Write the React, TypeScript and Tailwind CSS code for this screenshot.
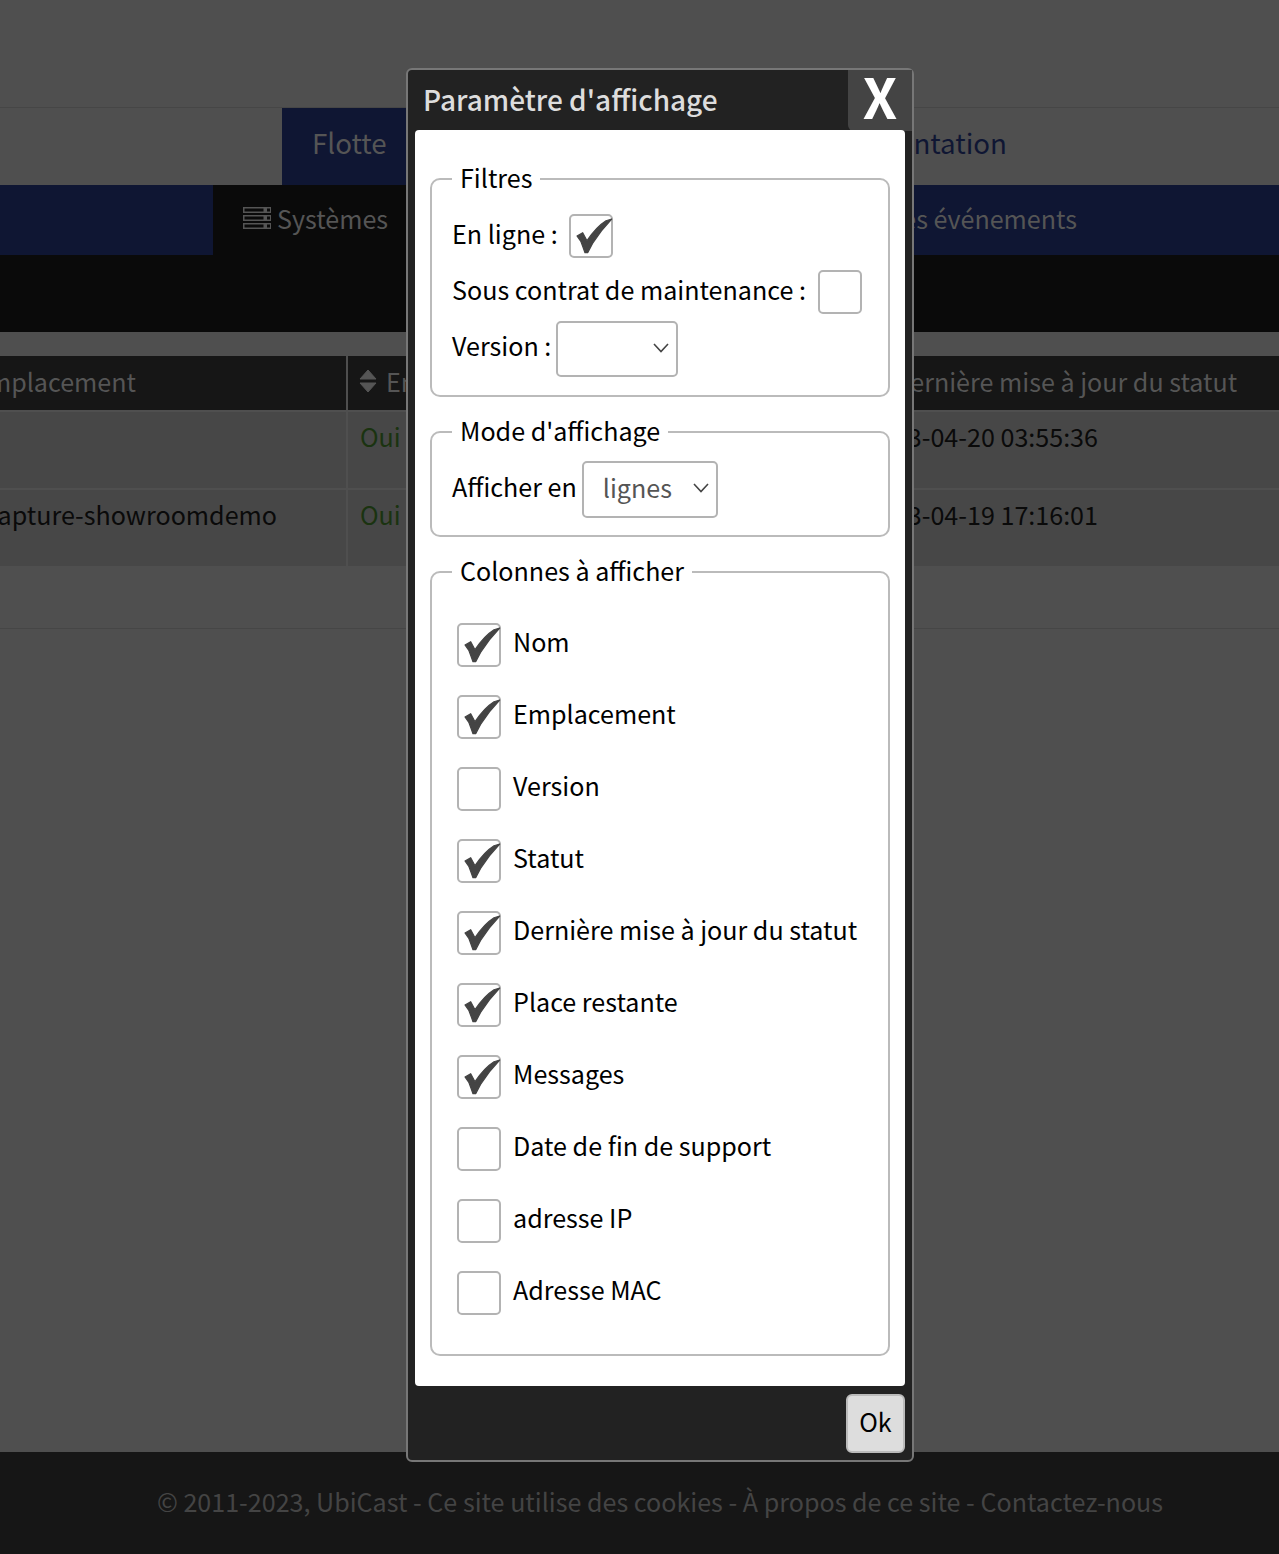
import React from "react";

const font = { fontFamily: '"Noto Sans CJK JP", "Noto Sans", sans-serif' };

function Check() {
  return (
    <svg viewBox="0 0 44 44" className="absolute left-0 top-0 h-[44px] w-[44px]">
      <path d="M8 22 L13.7 18.7 L18 26.7 Q27 13 37 6.7 L42.7 5 Q32 16 23.7 29.3 L18.7 38.7 L16 38.7 Q14 33 12 27.7 Z" fill="#444444" stroke="#444444" strokeWidth="1.2" strokeLinejoin="round" />
    </svg>
  );
}

function Box({ on, className = "" }: { on?: boolean; className?: string }) {
  return (
    <span className={`relative block h-[44px] w-[44px] shrink-0 rounded-[5px] border-2 border-[#b3b3b3] bg-white ${className}`}>
      {on && <span className="absolute -left-[2px] -top-[2px] block h-[44px] w-[44px]"><Check /></span>}
    </span>
  );
}

function Picker({ value, width, height, className = "" }: { value: string; width: string; height: string; className?: string }) {
  return (
    <span className={`relative block shrink-0 ${width} ${height} ${className}`}>
      <select
        defaultValue={value}
        className="h-full w-full appearance-none rounded-[5px] border-2 border-[#b3b3b3] bg-white pb-[6px] pl-[19px] text-[25.1px] text-[#555555] outline-none"
      >
        <option value={value}>{value}</option>
      </select>
      <svg viewBox="0 0 16 10" className="pointer-events-none absolute right-[9px] top-[22px] h-[10px] w-[16px]" fill="none" stroke="#444444" strokeWidth="1.6">
        <path d="M1 1 L8 8.5 L15 1" />
      </svg>
    </span>
  );
}

function Group({ title, children, className = "" }: { title: string; children: React.ReactNode; className?: string }) {
  return (
    <fieldset className={`rounded-[10px] border-2 border-[#bbbbbb] px-[20px] ${className}`}>
      <legend className="px-[8px] pb-[4px] text-[25.1px] leading-[36px]">{title}</legend>
      {children}
    </fieldset>
  );
}

const columns: [string, boolean][] = [
  ["Nom", true],
  ["Emplacement", true],
  ["Version", false],
  ["Statut", true],
  ["Dernière mise à jour du statut", true],
  ["Place restante", true],
  ["Messages", true],
  ["Date de fin de support", false],
  ["adresse IP", false],
  ["Adresse MAC", false],
];

function ServerIcon() {
  return (
    <svg viewBox="0 0 28 22" className="h-[22px] w-[28px]" fill="#555555">
      <path fillRule="evenodd" d="M0 0h28v6H0z M1.5 1.5v3h19v-3z M24 1.5v3h3v-3z" />
      <path fillRule="evenodd" d="M0 8h28v6H0z M1.5 9.5v3h19v-3z M24 9.5v3h3v-3z" />
      <path fillRule="evenodd" d="M0 16h28v6H0z M1.5 17.5v3h19v-3z M24 17.5v3h3v-3z" />
    </svg>
  );
}

function SortIcon() {
  return (
    <svg viewBox="0 0 18 24" className="h-[24px] w-[18px]" fill="#555555" stroke="#555555" strokeLinejoin="round">
      <path d="M9 1 L17 10 H1 Z" />
      <path d="M1 14 H17 L9 23 Z" />
    </svg>
  );
}

export default function App() {
  return (
    <div className="relative h-[1554px] w-[1279px] overflow-hidden bg-[#4f4f4f] text-[25.1px] leading-[40px]" style={font}>
      <div className="h-[107px]" />
      <div className="h-[1px] bg-[#464646]" />

      <nav className="flex h-[77px] justify-between pl-[282px] pr-[242px] text-[27.7px]">
        <span className="flex items-center bg-[#0f1633] px-[30px] pb-[9px] text-[#555555]">Flotte</span>
        <span className="flex items-center px-[30px] pb-[9px] text-[#0f1633]">Documentation</span>
      </nav>

      <div className="flex h-[70px] justify-between bg-[#0f1633] pl-[213px] pr-[202px] text-[#555555]">
        <span className="flex items-center gap-[6px] bg-[#0a0a0a] px-[30px] pb-[4px]">
          <ServerIcon />
          Systèmes
        </span>
        <span className="flex items-center pb-[4px] pl-[30px]">Tous les événements</span>
      </div>

      <div className="h-[77px] bg-[#0a0a0a]" />
      <div className="h-[24px]" />

      <div className="whitespace-nowrap">
        <div className="flex h-[54px] bg-[#161616] text-[#555555]">
          <div className="flex w-[346px] shrink-0 items-center justify-end pb-[5px] pr-[210px]">Emplacement</div>
          <div className="flex w-[506px] shrink-0 items-center gap-[9px] border-l-2 border-[#4f4f4f] pb-[5px] pl-[11px]">
            <SortIcon />
            En ligne
          </div>
          <div className="flex items-center gap-[9px] pb-[5px] pl-[14px]">
            <SortIcon />
            Dernière mise à jour du statut
          </div>
        </div>
        <div className="flex h-[78px] border-t-2 border-[#4f4f4f] bg-[#474747]">
          <div className="w-[346px] shrink-0" />
          <div className="w-[506px] shrink-0 border-l-2 border-[#4f4f4f] pl-[12px] pt-[4px] text-[#1a3310]">Oui</div>
          <div className="pl-[14px] pt-[4px] text-[#0a0a0a]">2023-04-20 03:55:36</div>
        </div>
        <div className="flex h-[78px] border-t-2 border-[#4f4f4f] bg-[#474747]">
          <div className="flex w-[346px] shrink-0 justify-end pr-[69px] pt-[4px] text-[#0a0a0a]">ubicapture-showroomdemo</div>
          <div className="w-[506px] shrink-0 border-l-2 border-[#4f4f4f] pl-[12px] pt-[4px] text-[#1a3310]">Oui</div>
          <div className="pl-[14px] pt-[4px] text-[#0a0a0a]">2023-04-19 17:16:01</div>
        </div>
      </div>

      <div className="h-[62px]" />
      <div className="h-[1px] bg-[#464646]" />
      <div className="h-[823px]" />

      <footer className="flex h-[102px] items-center justify-center bg-[#161616] pb-[4px] pl-[41px] text-[#444444]">
        © 2011-2023, UbiCast - Ce site utilise des cookies - À propos de ce site - Contactez-nous
      </footer>

      <div className="absolute left-[406px] top-[68px] flex h-[1394px] w-[508px] flex-col rounded-[6px] border-2 border-[#777777] bg-[#222222]">
        <div className="flex h-[60px] shrink-0 items-start justify-between">
          <span className="pl-[15px] text-[28px] font-medium leading-[58px] text-[#dddddd]">Paramètre d'affichage</span>
          <span className="mb-[-1px] flex h-[61px] w-[64px] items-center justify-center rounded-bl-[6px] bg-[#444444] pb-[10px] text-[55px] font-bold leading-none text-white">X</span>
        </div>

        <div className="mx-[7px] h-[1256px] shrink-0 rounded-[4px] bg-white px-[15px] pt-[29px] text-black">
          <Group title="Filtres" className="pb-[19px] pt-[9px]">
            <div className="flex h-[56px] items-center gap-[11px]">
              <span className="mb-[6px]">En ligne :</span>
              <Box on />
            </div>
            <div className="flex h-[56px] items-center gap-[12px]">
              <span className="mb-[6px]">Sous contrat de maintenance :</span>
              <Box />
            </div>
            <div className="flex h-[56px] items-center gap-[5px]">
              <span className="mb-[6px]">Version :</span>
              <Picker value="" width="w-[122px]" height="h-[56px]" className="translate-y-[1px]" />
            </div>
          </Group>

          <Group title="Mode d'affichage" className="mt-[15px] pb-[17px] pt-[9px]">
            <div className="flex items-center gap-[5px]">
              <span className="mb-[8px]">Afficher en</span>
              <Picker value="lignes" width="w-[136px]" height="h-[57px]" />
            </div>
          </Group>

          <Group title="Colonnes à afficher" className="mt-[15px] pb-[25px] pt-[17px]">
            {columns.map(([label, on]) => (
              <label key={label} className="flex h-[72px] items-center gap-[12px] pl-[5px]">
                <Box on={on} />
                <span className="mb-[8px]">{label}</span>
              </label>
            ))}
          </Group>
        </div>

        <div className="flex justify-end pr-[7px] pt-[8px]">
          <button className="flex h-[59px] w-[59px] items-center justify-center rounded-[6px] border-2 border-[#bbbbbb] bg-[#dddddd] pb-[6px] text-[25.1px] text-black">
            Ok
          </button>
        </div>
      </div>
    </div>
  );
}
